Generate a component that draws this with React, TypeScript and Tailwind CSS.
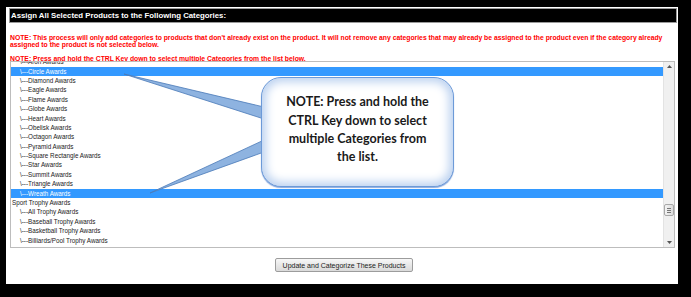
import React from "react";

type Item = { label: string; nested: boolean; selected?: boolean };

const items: Item[] = [
  { label: "Aron Awards", nested: true },
  { label: "Circle Awards", nested: true, selected: true },
  { label: "Diamond Awards", nested: true },
  { label: "Eagle Awards", nested: true },
  { label: "Flame Awards", nested: true },
  { label: "Globe Awards", nested: true },
  { label: "Heart Awards", nested: true },
  { label: "Obelisk Awards", nested: true },
  { label: "Octagon Awards", nested: true },
  { label: "Pyramid Awards", nested: true },
  { label: "Square Rectangle Awards", nested: true },
  { label: "Star Awards", nested: true },
  { label: "Summit Awards", nested: true },
  { label: "Triangle Awards", nested: true },
  { label: "Wreath Awards", nested: true, selected: true },
  { label: "Sport Trophy Awards", nested: false },
  { label: "All Trophy Awards", nested: true },
  { label: "Baseball Trophy Awards", nested: true },
  { label: "Basketball Trophy Awards", nested: true },
  { label: "Billiards/Pool Trophy Awards", nested: true },
  { label: "Bowling Trophy Awards", nested: true },
];

export default function App() {
  return (
    <div className="relative w-[691px] h-[297px] bg-black overflow-hidden font-['Liberation_Sans',Arial,sans-serif]">
      <div className="ml-[6px] mt-[7px] w-[672px] h-[277px] bg-white pl-[3px] pr-[1px] pt-[1px] flex flex-col">
        <div className="shrink-0 h-[15px] bg-black border border-[#9a9a9a] flex items-center pl-[1px] text-white font-bold text-[7.8px] leading-none">
          Assign All Selected Products to the Following Categories:
        </div>
        <div className="shrink-0 pl-[1px] mt-[11px] text-[#ff0000] font-bold text-[6.8px] leading-[7px] whitespace-nowrap">
          <p>
            NOTE: This process will only add categories to products that don't already exist on the product. It will not remove any categories that may already be assigned to the product even if the category already
          </p>
          <p>assigned to the product is not selected below.</p>
          <p className="mt-[7px] h-[6px] overflow-visible">
            NOTE: Press and hold the CTRL Key down to select multiple Categories from the list below.
          </p>
        </div>
        <div className="shrink-0 ml-[1px] w-[665px] h-[187px] border border-[#bdbdbd] bg-white flex overflow-hidden relative z-0">
          <div className="flex-1 overflow-hidden">
            <div className="-mt-[4.4px]">
              {items.map((it, i) => (
                <div
                  key={i}
                  className={
                    "h-[9.4px] flex items-center whitespace-nowrap text-[6.3px] leading-none " +
                    (it.selected ? "bg-[#3399ff] text-white " : "text-[#222] ") +
                    (it.nested ? "pl-[9px]" : "pl-[1px]")
                  }
                >
                  {it.nested ? "\\---" : ""}
                  {it.label}
                </div>
              ))}
            </div>
          </div>
          <div className="w-[11px] bg-[#f0f0f0] border-l border-[#e3e3e3] flex flex-col items-center justify-between py-[3px] relative">
            <svg width="5" height="3" viewBox="0 0 5 3">
              <polygon points="2.5,0 5,3 0,3" fill="#555" />
            </svg>
            <svg width="5" height="3" viewBox="0 0 5 3">
              <polygon points="0,0 5,0 2.5,3" fill="#555" />
            </svg>
            <div className="absolute left-[0px] top-[142px] w-[10px] h-[12px] rounded-[2px] border border-[#a8a8a8] bg-gradient-to-r from-[#f4f4f4] to-[#dcdcdc] flex flex-col items-center justify-center gap-[1px]">
              <div className="w-[4px] h-[1px] bg-[#777]" />
              <div className="w-[4px] h-[1px] bg-[#777]" />
              <div className="w-[4px] h-[1px] bg-[#777]" />
            </div>
          </div>
        </div>
        <div className="shrink-0 flex justify-center mt-[10px] pl-[2px]">
          <button className="w-[138px] h-[14px] rounded-[2px] border border-[#9c9c9c] bg-gradient-to-b from-[#f7f7f7] to-[#dadada] text-[7px] leading-none text-[#222] flex items-center justify-center">
            Update and Categorize These Products
          </button>
        </div>
      </div>

      <svg className="absolute left-0 top-0 pointer-events-none" width="691" height="297" viewBox="0 0 691 297">
        <polygon points="124,74 264,107 264,119" fill="#8eb3e0" stroke="#4a7ab8" strokeWidth="0.8" strokeLinejoin="round" />
        <polygon points="150,193 264,140 264,152" fill="#8eb3e0" stroke="#4a7ab8" strokeWidth="0.8" strokeLinejoin="round" />
      </svg>

      <div className="absolute left-[261px] top-[77px] w-[193px] h-[110px] rounded-[20px] border-[1.5px] border-[#6c9ad8] bg-white shadow-[inset_0_0_10px_4px_#bcd2f0,0_1px_1px_#8aaade] flex items-center justify-center">
        <p className="text-center font-['Lato',sans-serif] font-bold text-[12.5px] leading-[18.3px] text-[#1a1a1a] mt-[-4px]">
          NOTE: Press and hold the
          <br />
          CTRL Key down to select
          <br />
          multiple Categories from
          <br />
          the list.
        </p>
      </div>
    </div>
  );
}
